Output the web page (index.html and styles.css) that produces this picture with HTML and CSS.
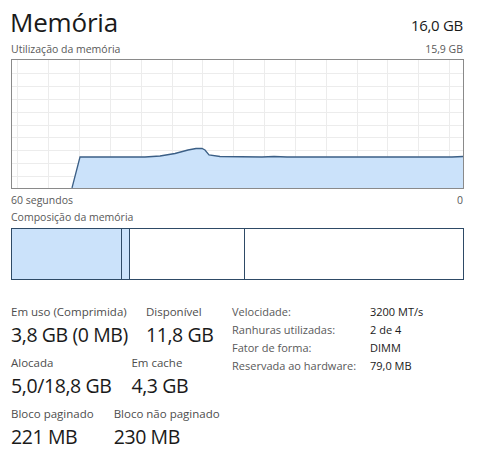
FILE: index.html
```html
<!DOCTYPE html>
<html lang="pt">
<head>
<meta charset="utf-8">
<link rel="stylesheet" href="styles.css">
</head>
<body>
<div class="page">
  <header class="head">
    <h1 class="title">Memória</h1>
    <div class="total">16,0 GB</div>
  </header>
  <div class="caption-row">
    <span>Utilização da memória</span>
    <span>15,9 GB</span>
  </div>
  <div class="graph">
    <svg width="451" height="128" viewBox="0 0 451 128">
      <g class="grid">
        <line x1="5.5" y1="0" x2="5.5" y2="128"/>
        <line x1="36.5" y1="0" x2="36.5" y2="128"/>
        <line x1="67.5" y1="0" x2="67.5" y2="128"/>
        <line x1="98.5" y1="0" x2="98.5" y2="128"/>
        <line x1="129.5" y1="0" x2="129.5" y2="128"/>
        <line x1="160.5" y1="0" x2="160.5" y2="128"/>
        <line x1="190.5" y1="0" x2="190.5" y2="128"/>
        <line x1="221.5" y1="0" x2="221.5" y2="128"/>
        <line x1="252.5" y1="0" x2="252.5" y2="128"/>
        <line x1="283.5" y1="0" x2="283.5" y2="128"/>
        <line x1="314.5" y1="0" x2="314.5" y2="128"/>
        <line x1="345.5" y1="0" x2="345.5" y2="128"/>
        <line x1="375.5" y1="0" x2="375.5" y2="128"/>
        <line x1="406.5" y1="0" x2="406.5" y2="128"/>
        <line x1="437.5" y1="0" x2="437.5" y2="128"/>
        <line x1="0" y1="13.5" x2="451" y2="13.5"/>
        <line x1="0" y1="26.5" x2="451" y2="26.5"/>
        <line x1="0" y1="39.5" x2="451" y2="39.5"/>
        <line x1="0" y1="52.5" x2="451" y2="52.5"/>
        <line x1="0" y1="65.5" x2="451" y2="65.5"/>
        <line x1="0" y1="77.5" x2="451" y2="77.5"/>
        <line x1="0" y1="90.5" x2="451" y2="90.5"/>
        <line x1="0" y1="103.5" x2="451" y2="103.5"/>
        <line x1="0" y1="116.5" x2="451" y2="116.5"/>
      </g>
      <path class="area" d="M60 128 L68 97 L133 97 L148 96 L163 93.5 L176 90 L184 88.5 L190 88.5 L193 90 L197 95 L208 96.5 L250 97 L262 96.5 L275 97 L440 97 L451 96.5 L451 128 Z"/>
      <path class="line" d="M60 128 L68 97 L133 97 L148 96 L163 93.5 L176 90 L184 88.5 L190 88.5 L193 90 L197 95 L208 96.5 L250 97 L262 96.5 L275 97 L440 97 L451 96.5"/>
    </svg>
  </div>
  <div class="caption-row axis">
    <span>60 segundos</span>
    <span>0</span>
  </div>
  <div class="caption-row comp-label">
    <span>Composição da memória</span>
  </div>
  <div class="composition">
    <div class="seg seg-inuse"></div>
    <div class="seg seg-modified"></div>
    <div class="seg seg-standby"></div>
    <div class="seg seg-free"></div>
  </div>
  <section class="stats">
    <div class="stats-left">
      <div class="stat-row">
        <div class="stat">
          <div class="label">Em uso (Comprimida)</div>
          <div class="value">3,8 GB (0 MB)</div>
        </div>
        <div class="stat">
          <div class="label">Disponível</div>
          <div class="value">11,8 GB</div>
        </div>
      </div>
      <div class="stat-row">
        <div class="stat">
          <div class="label">Alocada</div>
          <div class="value">5,0/18,8 GB</div>
        </div>
        <div class="stat">
          <div class="label">Em cache</div>
          <div class="value">4,3 GB</div>
        </div>
      </div>
      <div class="stat-row">
        <div class="stat">
          <div class="label">Bloco paginado</div>
          <div class="value">221 MB</div>
        </div>
        <div class="stat">
          <div class="label">Bloco não paginado</div>
          <div class="value">230 MB</div>
        </div>
      </div>
    </div>
    <dl class="stats-right">
      <dt>Velocidade:</dt><dd>3200 MT/s</dd>
      <dt>Ranhuras utilizadas:</dt><dd>2 de 4</dd>
      <dt>Fator de forma:</dt><dd>DIMM</dd>
      <dt>Reservada ao hardware:</dt><dd>79,0 MB</dd>
    </dl>
  </section>
</div>
</body>
</html>
```
FILE: styles.css
```css
* { box-sizing: border-box; }
html, body { margin: 0; padding: 0; background: #fff; }
body {
  font-family: "Open Sans", "Noto Sans", sans-serif;
  color: #1a1a1a;
  width: 478px;
  height: 452px;
  overflow: hidden;
}
.page {
  padding: 0 15px 0 11px;
}
.head {
  display: flex;
  justify-content: space-between;
  align-items: flex-end;
  height: 40px;
}
.title {
  margin: 0 0 0 -1px;
  font-weight: 400;
  font-size: 26px;
  line-height: 36px;
  letter-spacing: -0.2px;
}
.total {
  font-size: 15px;
  line-height: 20px;
  margin-bottom: 5px;
  letter-spacing: -0.3px;
}
.caption-row {
  display: flex;
  justify-content: space-between;
  font-size: 10.5px;
  line-height: 16px;
  color: #595959;
  height: 19px;
  padding-top: 1px;
}
.graph {
  width: 453px;
  height: 130px;
  border: 1px solid #8a8a8a;
}
.graph svg { display: block; }
.grid line { stroke: #ececec; stroke-width: 1; }
.area { fill: #cbe2fa; }
.line { fill: none; stroke: #3b5f86; stroke-width: 1.3; }
.axis { height: 19px; padding-top: 3px; }
.comp-label { height: 20px; padding-top: 1px; }
.composition {
  display: flex;
  width: 453px;
  height: 52px;
  border: 1px solid #2e4a66;
}
.seg { border-right: 1px solid #2e4a66; height: 100%; }
.seg-inuse { width: 110px; background: #cbe2fa; }
.seg-modified { width: 8px; background: #cbe2fa; }
.seg-standby { width: 115px; background: #fff; }
.seg-free { flex: 1; border-right: 0; background: #fff; }
.stats {
  display: flex;
  margin-top: 23px;
}
.stats-left {
  width: 221px;
  display: flex;
  flex-direction: column;
  gap: 5px;
}
.stat-row {
  display: flex;
  gap: 18px;
}
.stat-row:nth-child(2) { gap: 20px; }
.stat-row:nth-child(3) { gap: 20px; }
.label {
  font-size: 11.5px;
  line-height: 18px;
  color: #4d4d4d;
}
.value {
  font-size: 19.5px;
  line-height: 28px;
  letter-spacing: -0.4px;
  color: #1a1a1a;
}
.stats-right {
  margin: 0;
  display: grid;
  grid-template-columns: 138px auto;
  grid-auto-rows: 18px;
  font-size: 11px;
  line-height: 18px;
}
.stats-right dt { color: #595959; }
.stats-right dd { margin: 0; color: #1a1a1a; }
```
